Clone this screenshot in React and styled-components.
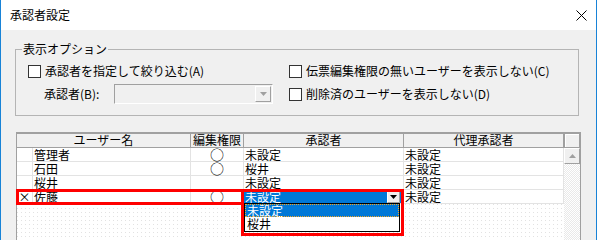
import React from "react";
import styled, { createGlobalStyle } from "styled-components";

const GlobalStyle = createGlobalStyle`
  html, body {
    margin: 0;
    padding: 0;
  }
  body {
    font-family: "Noto Sans CJK JP", "Noto Sans", sans-serif;
    font-size: 12px;
    color: #000;
    background: #fff;
  }
`;

const Window = styled.div`
  width: 597px;
  height: 240px;
  box-sizing: border-box;
  border-left: 1px solid #1883d7;
  border-right: 1px solid #1883d7;
  background: #f0f0f0;
  display: flex;
  flex-direction: column;
  overflow: hidden;
`;

const TitleBar = styled.div`
  height: 30px;
  flex: none;
  background: #fff;
  display: flex;
  align-items: center;
  justify-content: space-between;
  padding: 0 9px 0 9px;
`;

const Title = styled.span`
  font-size: 12px;
  line-height: 16px;
`;

const Body = styled.div`
  flex: 1;
  display: flex;
  flex-direction: column;
  padding: 11px 17px 0 14px;
  min-height: 0;
`;

const Group = styled.fieldset`
  margin: 0;
  padding: 7px 12px 11px 12px;
  border: 1px solid #b4b4b4;
  min-width: 0;
  display: grid;
  grid-template-columns: 261px 1fr;
  grid-template-rows: 14px 20px;
  row-gap: 6px;
`;

const Legend = styled.legend`
  padding: 0 1px;
  margin-left: -6px;
  line-height: 16px;
  font-size: 12px;
`;

const Option = styled.label`
  display: flex;
  align-items: center;
  gap: 4px;
  line-height: 14px;
  white-space: nowrap;
  padding-left: ${(p) => p.$indent || 0}px;
`;

const Box = styled.span`
  width: 13px;
  height: 13px;
  box-sizing: border-box;
  flex: none;
  background: #fff;
  border: 1px solid #333;
`;

const FieldLabel = styled.span`
  width: 66px;
  flex: none;
  line-height: 14px;
`;

const Combo = styled.div`
  width: 159px;
  height: 20px;
  box-sizing: border-box;
  display: flex;
  justify-content: flex-end;
  padding: 1px;
  border-top: 1px solid #a0a0a0;
  border-left: 1px solid #a0a0a0;
  border-right: 1px solid #fff;
  border-bottom: 1px solid #fff;
  background: #f0f0f0;
`;

const ComboButton = styled.span`
  width: 16px;
  height: 16px;
  box-sizing: border-box;
  display: flex;
  align-items: center;
  justify-content: center;
  background: #f0f0f0;
  border-top: 1px solid #fff;
  border-left: 1px solid #fff;
  border-right: 1px solid #a0a0a0;
  border-bottom: 1px solid #a0a0a0;
`;

const Grid = styled.div`
  flex: 1;
  width: 565px;
  box-sizing: border-box;
  margin: 16px 0 0 1px;
  display: flex;
  border-left: 1px solid #a0a0a0;
  border-right: 1px solid #a0a0a0;
  border-top: 2px solid #a0a0a0;
  background: #fff;
`;

const TableArea = styled.div`
  position: relative;
  width: 547px;
  display: flex;
  flex-direction: column;
`;

const HeaderRow = styled.div`
  display: grid;
  grid-template-columns: 174px 53px 160px 160px;
  height: 13px;
  background: #f0f0f0;
  border-bottom: 1px solid #a0a0a0;
`;

const HeadCell = styled.div`
  border-right: 1px solid #a0a0a0;
  text-align: center;
  line-height: 12px;
  white-space: nowrap;
`;

const Row = styled.div`
  display: grid;
  grid-template-columns: 16px 158px 53px 160px 160px;
  height: 14px;
`;

const Cell = styled.div`
  box-sizing: border-box;
  height: 14px;
  border-right: 1px solid #e3e3e3;
  border-bottom: 1px solid #e3e3e3;
  line-height: 13px;
  padding-left: ${(p) => (p.$center ? 0 : 1)}px;
  text-align: ${(p) => (p.$center ? "center" : "left")};
  white-space: nowrap;
`;

const Circle = styled.span`
  font-size: 14px;
  line-height: 13px;
  color: #000;
`;

const EditCell = styled.div`
  box-sizing: border-box;
  height: 14px;
  border-right: 1px solid #e3e3e3;
  border-bottom: 1px solid #e3e3e3;
  background: #0078d7;
  color: #fff;
  display: flex;
  align-items: flex-start;
  padding: 0 3px 0 1px;
  line-height: 13px;
`;

const EditText = styled.span`
  flex: 1;
`;

const EditButton = styled.span`
  width: 13px;
  height: 13px;
  box-sizing: border-box;
  display: flex;
  align-items: center;
  justify-content: center;
  background: #f0f0f0;
  border-top: 1px solid #fff;
  border-left: 1px solid #fff;
  border-right: 1px solid #a0a0a0;
  border-bottom: 1px solid #a0a0a0;
`;

const EmptyArea = styled.div`
  flex: 1;
  background-color: #fff;
  background-image: conic-gradient(
    from 270deg at 1px 1px,
    #e2e2e2 90deg,
    transparent 0
  );
  background-size: 4px 4px;
`;

const ScrollColumn = styled.div`
  width: 16px;
  display: flex;
  flex-direction: column;
`;

const Corner = styled.div`
  height: 14px;
  box-sizing: border-box;
  border: 1px solid #a0a0a0;
  border-top: none;
  background: #f0f0f0;
  box-shadow: inset 1px 1px #fff;
`;

const UpButton = styled.div`
  height: 16px;
  box-sizing: border-box;
  display: flex;
  align-items: center;
  justify-content: center;
  background: #f0f0f0;
  border-top: 1px solid #fff;
  border-left: 1px solid #fff;
  border-right: 1px solid #a0a0a0;
  border-bottom: 1px solid #a0a0a0;
`;

const Track = styled.div`
  flex: 1;
  background-image: repeating-conic-gradient(#e9e9e9 0 25%, #fff 0 50%);
  background-size: 2px 2px;
`;

const DropList = styled.div`
  position: absolute;
  left: 227px;
  top: 69px;
  width: 156px;
  height: 29px;
  box-sizing: border-box;
  background: #fff;
  border: 1px solid #000;
  padding: 0;
`;

const ListItem = styled.div`
  height: 13px;
  line-height: 13px;
  padding-left: 2px;
  background: ${(p) => (p.$selected ? "#0078d7" : "#fff")};
  color: ${(p) => (p.$selected ? "#fff" : "#000")};
  outline: ${(p) => (p.$selected ? "1px dotted #f5a623" : "none")};
  outline-offset: -1px;
`;

const Mark = styled.div`
  position: absolute;
  box-sizing: border-box;
  border: 3px solid #ff0000;
  pointer-events: none;
`;

const Arrow = ({ up, color }) => (
  <svg width="7" height="4" viewBox="0 0 7 4">
    <polygon points={up ? "3.5,0 7,4 0,4" : "0,0 7,0 3.5,4"} fill={color} />
  </svg>
);

const rows = [
  { head: "", user: "管理者", edit: "○", approver: "未設定", proxy: "未設定" },
  { head: "", user: "石田", edit: "○", approver: "桜井", proxy: "未設定" },
  { head: "", user: "桜井", edit: "", approver: "未設定", proxy: "未設定" },
];

export default function App() {
  return (
    <>
      <GlobalStyle />
      <Window>
        <TitleBar>
          <Title>承認者設定</Title>
          <svg width="11" height="11" viewBox="0 0 11 11">
            <path d="M0.5 0.5 L10.5 10.5 M10.5 0.5 L0.5 10.5" stroke="#000" strokeWidth="1" />
          </svg>
        </TitleBar>
        <Body>
          <Group>
            <Legend>表示オプション</Legend>
            <Option>
              <Box />
              承認者を指定して絞り込む(A)
            </Option>
            <Option>
              <Box />
              伝票編集権限の無いユーザーを表示しない(C)
            </Option>
            <Option $indent={16}>
              <FieldLabel>承認者(B):</FieldLabel>
              <Combo>
                <ComboButton>
                  <Arrow color="#a0a0a0" />
                </ComboButton>
              </Combo>
            </Option>
            <Option>
              <Box />
              削除済のユーザーを表示しない(D)
            </Option>
          </Group>
          <Grid>
            <TableArea>
              <HeaderRow>
                <HeadCell>ユーザー名</HeadCell>
                <HeadCell>編集権限</HeadCell>
                <HeadCell>承認者</HeadCell>
                <HeadCell>代理承認者</HeadCell>
              </HeaderRow>
              {rows.map((r) => (
                <Row key={r.user}>
                  <Cell $center>{r.head}</Cell>
                  <Cell>{r.user}</Cell>
                  <Cell $center>{r.edit && <Circle>{r.edit}</Circle>}</Cell>
                  <Cell>{r.approver}</Cell>
                  <Cell>{r.proxy}</Cell>
                </Row>
              ))}
              <Row>
                <Cell $center>×</Cell>
                <Cell>佐藤</Cell>
                <Cell $center>
                  <Circle>○</Circle>
                </Cell>
                <EditCell>
                  <EditText>未設定</EditText>
                  <EditButton>
                    <Arrow color="#000" />
                  </EditButton>
                </EditCell>
                <Cell>未設定</Cell>
              </Row>
              <EmptyArea />
              <DropList>
                <ListItem $selected>未設定</ListItem>
                <ListItem>桜井</ListItem>
              </DropList>
              <Mark style={{ left: -1, top: 55, width: 228, height: 16 }} />
              <Mark style={{ left: 224, top: 55, width: 163, height: 47 }} />
            </TableArea>
            <ScrollColumn>
              <Corner />
              <UpButton>
                <Arrow up color="#a0a0a0" />
              </UpButton>
              <Track />
            </ScrollColumn>
          </Grid>
        </Body>
      </Window>
    </>
  );
}
